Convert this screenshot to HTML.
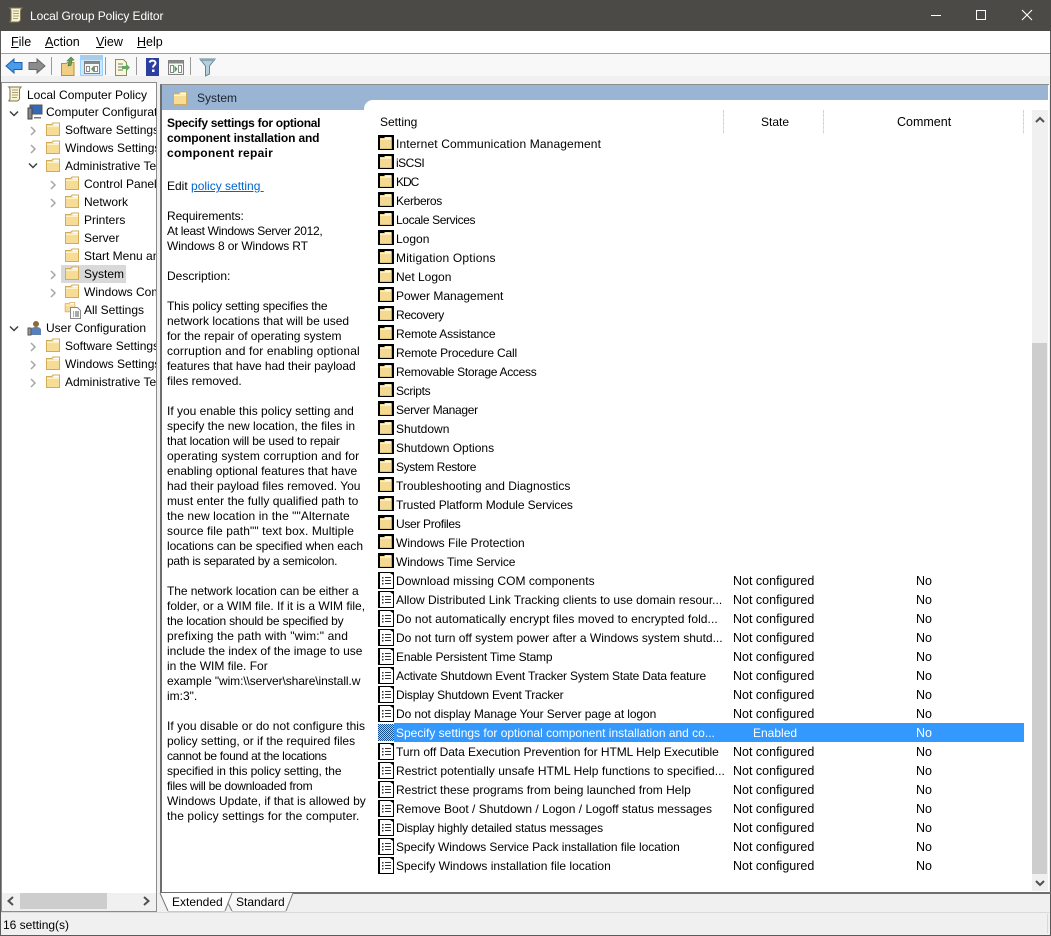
<!DOCTYPE html>
<html><head><meta charset="utf-8"><title>Local Group Policy Editor</title>
<style>
*{box-sizing:border-box}
html,body{margin:0;padding:0}
body{width:1051px;height:936px;position:relative;overflow:hidden;background:#f0f0f0;font:12px/15px "Liberation Sans",sans-serif;color:#000}
.a{position:absolute;white-space:nowrap}
svg{display:block;overflow:visible}
#tree .r{position:absolute;height:18px;line-height:18px;white-space:nowrap}
#tree svg{position:absolute}
.rw{height:19px;line-height:19px;position:relative;white-space:nowrap}
.rw svg{position:absolute;left:0;top:1px}
.rw b{font-weight:normal;position:absolute;left:18px;top:1px}
.rw i{font-style:normal;position:absolute;left:355px;top:1px;font-size:12.5px}
.rw u{text-decoration:none;position:absolute;left:538px;top:1px;font-size:12.5px}
.sel{background:linear-gradient(90deg,transparent 16px,#3399ff 16px);color:#fff}
.sep{position:absolute;top:110px;width:1px;height:24px;background:repeating-linear-gradient(180deg,#d4d4d4 0 3px,#ededed 3px 4px)}
</style></head><body>
<svg width="0" height="0" style="position:absolute"><defs>
<pattern id="dt" width="2" height="2" patternUnits="userSpaceOnUse"><rect width="2" height="2" fill="#a8d0f5"/><rect width="1" height="1" fill="#14508f"/><rect x="1" y="1" width="1" height="1" fill="#14508f"/></pattern>
<g id="fd"><path d="M1.500 3.500h5l1.500-1.500h6.500v12.500h-13z" fill="#f7dc95" stroke="#d2ab58"/><path d="M2 5h12v1H2z" fill="#fff3c8"/><path d="M8.500 2.500h5.500v2h-5.500z" fill="#fff"/></g>
<g id="fb"><path d="M0 0h16v15H0z" fill="#000"/><path d="M2 3h4l1-1h6.500v11.500H2z" fill="#f3d992"/><path d="M7 2.500h6v1.500H7z" fill="#fff8dc"/><path d="M2 4h11v1H2z" fill="#fdeebc"/><path d="M13 2.500h1V14H2v-.5h11z" fill="#c9a85c"/></g>
<g id="pl"><path d="M0 0h16v17H0z" fill="#000"/><path d="M2 1h10l3 2v13H2z" fill="#fff"/><path d="M4 5h1.500v1.500H4zM7 5h6v1H7zM4 8h1.500v1.500H4zM7 8h6v1H7zM4 11h1.500v1.500H4zM7 11h6v1H7z" fill="#333"/></g>
<g id="ch"><path d="M1 1l4 4-4 4" fill="none" stroke="#a6a6a6" stroke-width="1.500"/></g>
<g id="cd"><path d="M1 1.500l4 4 4-4" fill="none" stroke="#404040" stroke-width="1.500"/></g>
<g id="sc"><path d="M3.500 1h10.500c-1 1-1.500 2-1.500 3v8.500c0 1.500-1.500 2.500-3 2.500H1.500c1.200-.6 1.500-1.300 1.500-2.500V4C3 2.500 2.500 1.500 1.800 1z" fill="#faf3cf" stroke="#7f7658"/><path d="M5 4h6M5 6.500h6M5 9h6M5 11.500h5" stroke="#a89f78"/></g>
</defs></svg>

<!-- title bar -->
<div class="a" style="left:0;top:0;width:1051px;height:31px;background:#4b4a47"></div>
<svg class="a" style="left:8px;top:7px" width="16" height="17"><use href="#sc"/></svg>
<div class="a" style="left:30px;top:9px;color:#fff;letter-spacing:-.08px">Local Group Policy Editor</div>
<div class="a" style="left:931px;top:15px;width:10px;height:1px;background:#fff"></div>
<div class="a" style="left:976px;top:10px;width:10px;height:10px;border:1px solid #fff"></div>
<svg class="a" style="left:1022px;top:10px" width="10" height="10"><path d="M0 0l10 10M10 0L0 10" stroke="#fff" stroke-width="1.100"/></svg>
<!-- window borders -->
<div class="a" style="left:0;top:31px;width:1px;height:905px;background:#5a5a5a"></div>
<div class="a" style="left:1050px;top:31px;width:1px;height:905px;background:#5a5a5a"></div>
<div class="a" style="left:0;top:935px;width:1051px;height:1px;background:#5a5a5a"></div>

<!-- menu -->
<div class="a" style="left:1px;top:31px;width:1049px;height:22px;background:#fff"></div>
<div class="a" style="left:1px;top:53px;width:1049px;height:1px;background:#a0a0a0"></div>
<div class="a" style="left:11px;top:35px;font-size:12.5px"><span style="text-decoration:underline">F</span>ile</div>
<div class="a" style="left:45px;top:35px;font-size:12.5px"><span style="text-decoration:underline">A</span>ction</div>
<div class="a" style="left:96px;top:35px;font-size:12.5px"><span style="text-decoration:underline">V</span>iew</div>
<div class="a" style="left:137px;top:35px;font-size:12.5px"><span style="text-decoration:underline">H</span>elp</div>

<!-- toolbar -->
<div class="a" style="left:1px;top:54px;width:1049px;height:22px;background:#f8f8f8"></div>
<svg class="a" style="left:0;top:53px" width="225" height="24">
<path d="M6 13l8-7v3.500h8v7h-8V20z" fill="#4a9bea" stroke="#1d5fb0"/>
<path d="M45 13l-8-7v3.500h-8v7h8V20z" fill="#8c8c8c" stroke="#666"/>
<path d="M51.500 4v18M105.500 4v18M136.500 4v18M190.500 4v18" stroke="#9a9a9a"/>
<path d="M61.500 10.500h5l1-1h6.500v13h-12.500z" fill="#f0cf85" stroke="#b48f45"/>
<path d="M68 13l1-5-2 0 4-4 3 3-2 .5-1 5z" fill="#5ea05a" stroke="#3c7a3e" stroke-width=".6"/>
<rect x="80.500" y="2.500" width="22" height="20" fill="#cce8ff" stroke="#99d1ff"/>
<path d="M81 3h21v4H81z" fill="#a9cde6"/>
<rect x="84.500" y="8.500" width="15" height="12" fill="#f6f6f6" stroke="#808080"/><path d="M85 9h14v2H85z" fill="#888"/>
<path d="M86.500 13.500h3v5h-3zM94.500 13.500h3v5h-3z" fill="#fff" stroke="#8a8a8a"/><path d="M94 12.500l-3 3.500 3 3.500z" fill="#5ea05a"/>
<path d="M115.500 6.500h8l3 3v13h-11z" fill="#faf6d8" stroke="#8c8c70"/><path d="M118 11h5M118 14h5M118 17h5" stroke="#777"/><path d="M122 13h4v-2.500l4 4-4 4V16h-4z" fill="#62a95e"/>
<rect x="146" y="5" width="13" height="18" fill="#2b3f9e"/><path d="M149.500 9.500c1-2.500 6-2.500 6 .5 0 2-2.500 2-2.500 4.500" fill="none" stroke="#fff" stroke-width="2"/><rect x="152" y="16.500" width="2.500" height="2.500" fill="#fff"/>
<rect x="168.500" y="7.500" width="15" height="14" fill="#f6f6f6" stroke="#808080"/><path d="M169 8h14v2.500h-14z" fill="#888"/>
<path d="M170.500 12.500h3v7h-3zM178.500 12.500h3v7h-3z" fill="#fff" stroke="#8a8a8a"/><path d="M174.500 12.500l3 3.500-3 3.500z" fill="#4ea04e"/>
<path d="M200 6h15l-5.500 7v8l-4 2V13z" fill="#b7cfdc" stroke="#6b8494"/><path d="M200 6h15v2h-15z" fill="#8aa6b5"/>
</svg>

<!-- tree pane -->
<div id="tree" class="a" style="left:1px;top:82px;width:156px;height:830px;background:#fff;border:1px solid #8c8c8c;overflow:hidden">
<div class="r" style="left:25px;top:3px">Local Computer Policy</div>
<svg style="left:5px;top:3px" width="16" height="17"><use href="#sc"/></svg>
<div class="r" style="left:44px;top:20px">Computer Configuration</div>
<svg style="left:7px;top:27px" width="10" height="8"><use href="#cd"/></svg>
<svg style="left:25px;top:21px" width="16" height="16"><rect x="3" y="1" width="12" height="9" fill="#3569b5" stroke="#555"/><rect x="1" y="4" width="4" height="11" fill="#888" stroke="#444"/><path d="M7 13h7v1.500H7z" fill="#777"/></svg>
<div class="r" style="left:63px;top:38px">Software Settings</div>
<svg style="left:28px;top:43px" width="7" height="10"><use href="#ch"/></svg>
<svg style="left:43px;top:38px" width="16" height="16"><use href="#fd"/></svg>
<div class="r" style="left:63px;top:56px">Windows Settings</div>
<svg style="left:28px;top:61px" width="7" height="10"><use href="#ch"/></svg>
<svg style="left:43px;top:56px" width="16" height="16"><use href="#fd"/></svg>
<div class="r" style="left:63px;top:74px">Administrative Templates</div>
<svg style="left:26px;top:79px" width="10" height="8"><use href="#cd"/></svg>
<svg style="left:43px;top:74px" width="16" height="16"><use href="#fd"/></svg>
<div class="r" style="left:82px;top:92px">Control Panel</div>
<svg style="left:48px;top:97px" width="7" height="10"><use href="#ch"/></svg>
<svg style="left:62px;top:92px" width="16" height="16"><use href="#fd"/></svg>
<div class="r" style="left:82px;top:110px">Network</div>
<svg style="left:48px;top:115px" width="7" height="10"><use href="#ch"/></svg>
<svg style="left:62px;top:110px" width="16" height="16"><use href="#fd"/></svg>
<div class="r" style="left:82px;top:128px">Printers</div>
<svg style="left:62px;top:128px" width="16" height="16"><use href="#fd"/></svg>
<div class="r" style="left:82px;top:146px">Server</div>
<svg style="left:62px;top:146px" width="16" height="16"><use href="#fd"/></svg>
<div class="r" style="left:82px;top:164px">Start Menu and Taskbar</div>
<svg style="left:62px;top:164px" width="16" height="16"><use href="#fd"/></svg>
<div style="position:absolute;left:59px;top:182px;width:65px;height:18px;background:#d9d9d9"></div>
<div class="r" style="left:82px;top:182px">System</div>
<svg style="left:48px;top:187px" width="7" height="10"><use href="#ch"/></svg>
<svg style="left:62px;top:182px" width="16" height="16"><use href="#fd"/></svg>
<div class="r" style="left:82px;top:200px">Windows Components</div>
<svg style="left:48px;top:205px" width="7" height="10"><use href="#ch"/></svg>
<svg style="left:62px;top:200px" width="16" height="16"><use href="#fd"/></svg>
<div class="r" style="left:82px;top:218px">All Settings</div>
<svg style="left:62px;top:218px" width="18" height="18"><use href="#fd" transform="scale(.75)"/><path d="M6.500 6.500h7l3 3v8h-10z" fill="#fff" stroke="#888"/><path d="M9 11h1M11 11h4M9 13h1M11 13h4M9 15h1M11 15h4" stroke="#555"/></svg>
<div class="r" style="left:44px;top:236px">User Configuration</div>
<svg style="left:7px;top:242px" width="10" height="8"><use href="#cd"/></svg>
<svg style="left:25px;top:237px" width="16" height="16"><circle cx="9" cy="4" r="3" fill="#8a6a3a"/><path d="M4 15V10c0-2 2-3 5-3s5 1 5 3v5z" fill="#5a7fb5"/><rect x="1" y="8" width="3" height="7" fill="#999" stroke="#555"/></svg>
<div class="r" style="left:63px;top:254px">Software Settings</div>
<svg style="left:28px;top:259px" width="7" height="10"><use href="#ch"/></svg>
<svg style="left:43px;top:254px" width="16" height="16"><use href="#fd"/></svg>
<div class="r" style="left:63px;top:272px">Windows Settings</div>
<svg style="left:28px;top:277px" width="7" height="10"><use href="#ch"/></svg>
<svg style="left:43px;top:272px" width="16" height="16"><use href="#fd"/></svg>
<div class="r" style="left:63px;top:290px">Administrative Templates</div>
<svg style="left:28px;top:295px" width="7" height="10"><use href="#ch"/></svg>
<svg style="left:43px;top:290px" width="16" height="16"><use href="#fd"/></svg>
<!-- horizontal scrollbar -->
<div style="position:absolute;left:0;top:810px;width:155px;height:18px;background:#f0f0f0"></div>
<div style="position:absolute;left:18px;top:810px;width:87px;height:16px;background:#cdcdcd"></div>
<svg style="left:5px;top:813px" width="8" height="10"><path d="M6 1L1.500 5 6 9" fill="none" stroke="#505050" stroke-width="2"/></svg>
<svg style="left:140px;top:813px" width="8" height="10"><path d="M2 1l4.500 4L2 9" fill="none" stroke="#505050" stroke-width="2"/></svg>
</div>

<!-- right pane -->
<div class="a" style="left:160px;top:84px;width:889px;height:809px;background:#fff;border-left:2px solid #6e6e6e;border-top:1px solid #8c8c8c"></div>
<div class="a" style="left:162px;top:85px;width:886px;height:15px;background:#9ab5d3"></div>
<div class="a" style="left:162px;top:100px;width:210px;height:10px;background:#9ab5d3"></div>
<div class="a" style="left:364px;top:100px;width:10px;height:10px;background:#fff;border-top-left-radius:9px"></div>
<svg class="a" style="left:172px;top:90px" width="16" height="16"><use href="#fd"/></svg>
<div class="a" style="left:197px;top:91px;color:#1a2330">System</div>

<!-- description -->
<div class="a" style="left:167px;top:116px;font-weight:bold"><span style="letter-spacing:-.28px">Specify settings for optional</span><br><span style="letter-spacing:-.14px">component installation and</span><br><span style="letter-spacing:.3px">component repair</span></div>
<div class="a" style="left:167px;top:179px">Edit <span style="color:#0066cc;text-decoration:underline">policy setting&nbsp;</span></div>
<div class="a" style="left:167px;top:209px"><span style="letter-spacing:-.1px">Requirements:</span><br><span style="letter-spacing:-.3px">At least Windows Server 2012,</span><br><span style="letter-spacing:-.13px">Windows 8 or Windows RT</span><br><br>Description:<br><br><span style="letter-spacing:-.15px">This policy setting specifies the</span><br>network locations that will be used<br><span style="letter-spacing:-.05px">for the repair of operating system</span><br><span style="letter-spacing:.13px">corruption and for enabling optional</span><br><span style="letter-spacing:-.08px">features that have had their payload</span><br>files removed.<br><br>If you enable this policy setting and<br>specify the new location, the files in<br><span style="letter-spacing:-.15px">that location will be used to repair</span><br><span style="letter-spacing:.1px">operating system corruption and for</span><br>enabling optional features that have<br>had their payload files removed. You<br><span style="letter-spacing:.05px">must enter the fully qualified path to</span><br><span style="letter-spacing:.1px">the new location in the ""Alternate</span><br><span style="letter-spacing:.1px">source file path"" text box. Multiple</span><br><span style="letter-spacing:-.08px">locations can be specified when each</span><br><span style="letter-spacing:-.26px">path is separated by a semicolon.</span><br><br><span style="letter-spacing:-.05px">The network location can be either a</span><br>folder, or a WIM file. If it is a WIM file,<br><span style="letter-spacing:-.2px">the location should be specified by</span><br><span style="letter-spacing:.13px">prefixing the path with "wim:" and</span><br>include the index of the image to use<br>in the WIM file. For<br><span style="letter-spacing:-.1px">example "wim:\\server\share\install.w</span><br>im:3".<br><br><span style="letter-spacing:.05px">If you disable or do not configure this</span><br>policy setting, or if the required files<br><span style="letter-spacing:-.33px">cannot be found at the locations</span><br><span style="letter-spacing:-.1px">specified in this policy setting, the</span><br><span style="letter-spacing:-.28px">files will be downloaded from</span><br>Windows Update, if that is allowed by<br><span style="letter-spacing:.1px">the policy settings for the computer.</span></div>

<!-- list header -->
<div class="a" style="left:380px;top:115px">Setting</div>
<div class="a" style="left:761px;top:115px">State</div>
<div class="a" style="left:897px;top:115px;font-size:12.5px">Comment</div>
<div class="sep" style="left:723px"></div><div class="sep" style="left:823px"></div><div class="sep" style="left:1023px"></div>

<!-- list -->
<div class="a" style="left:378px;top:134px;width:646px">
<div class="rw"><svg width="16" height="17"><use href="#fb"/></svg><b style="letter-spacing:.13px">Internet Communication Management</b></div>
<div class="rw"><svg width="16" height="17"><use href="#fb"/></svg><b style="letter-spacing:-.5px">iSCSI</b></div>
<div class="rw"><svg width="16" height="17"><use href="#fb"/></svg><b style="letter-spacing:-1px">KDC</b></div>
<div class="rw"><svg width="16" height="17"><use href="#fb"/></svg><b style="letter-spacing:-.35px">Kerberos</b></div>
<div class="rw"><svg width="16" height="17"><use href="#fb"/></svg><b style="letter-spacing:-.37px">Locale Services</b></div>
<div class="rw"><svg width="16" height="17"><use href="#fb"/></svg><b>Logon</b></div>
<div class="rw"><svg width="16" height="17"><use href="#fb"/></svg><b style="letter-spacing:.2px">Mitigation Options</b></div>
<div class="rw"><svg width="16" height="17"><use href="#fb"/></svg><b>Net Logon</b></div>
<div class="rw"><svg width="16" height="17"><use href="#fb"/></svg><b>Power Management</b></div>
<div class="rw"><svg width="16" height="17"><use href="#fb"/></svg><b style="letter-spacing:-.35px">Recovery</b></div>
<div class="rw"><svg width="16" height="17"><use href="#fb"/></svg><b style="letter-spacing:-.2px">Remote Assistance</b></div>
<div class="rw"><svg width="16" height="17"><use href="#fb"/></svg><b style="letter-spacing:-.18px">Remote Procedure Call</b></div>
<div class="rw"><svg width="16" height="17"><use href="#fb"/></svg><b style="letter-spacing:-.29px">Removable Storage Access</b></div>
<div class="rw"><svg width="16" height="17"><use href="#fb"/></svg><b style="letter-spacing:-.34px">Scripts</b></div>
<div class="rw"><svg width="16" height="17"><use href="#fb"/></svg><b style="letter-spacing:-.3px">Server Manager</b></div>
<div class="rw"><svg width="16" height="17"><use href="#fb"/></svg><b>Shutdown</b></div>
<div class="rw"><svg width="16" height="17"><use href="#fb"/></svg><b>Shutdown Options</b></div>
<div class="rw"><svg width="16" height="17"><use href="#fb"/></svg><b style="letter-spacing:-.38px">System Restore</b></div>
<div class="rw"><svg width="16" height="17"><use href="#fb"/></svg><b>Troubleshooting and Diagnostics</b></div>
<div class="rw"><svg width="16" height="17"><use href="#fb"/></svg><b style="letter-spacing:-.11px">Trusted Platform Module Services</b></div>
<div class="rw"><svg width="16" height="17"><use href="#fb"/></svg><b style="letter-spacing:-.33px">User Profiles</b></div>
<div class="rw"><svg width="16" height="17"><use href="#fb"/></svg><b>Windows File Protection</b></div>
<div class="rw"><svg width="16" height="17"><use href="#fb"/></svg><b style="letter-spacing:-.1px">Windows Time Service</b></div>
<div class="rw"><svg width="16" height="17"><use href="#pl"/></svg><b style="letter-spacing:.04px">Download missing COM components</b><i>Not configured</i><u>No</u></div>
<div class="rw"><svg width="16" height="17"><use href="#pl"/></svg><b>Allow Distributed Link Tracking clients to use domain resour...</b><i>Not configured</i><u>No</u></div>
<div class="rw"><svg width="16" height="17"><use href="#pl"/></svg><b style="letter-spacing:.07px">Do not automatically encrypt files moved to encrypted fold...</b><i>Not configured</i><u>No</u></div>
<div class="rw"><svg width="16" height="17"><use href="#pl"/></svg><b>Do not turn off system power after a Windows system shutd...</b><i>Not configured</i><u>No</u></div>
<div class="rw"><svg width="16" height="17"><use href="#pl"/></svg><b style="letter-spacing:-.18px">Enable Persistent Time Stamp</b><i>Not configured</i><u>No</u></div>
<div class="rw"><svg width="16" height="17"><use href="#pl"/></svg><b style="letter-spacing:-.19px">Activate Shutdown Event Tracker System State Data feature</b><i>Not configured</i><u>No</u></div>
<div class="rw"><svg width="16" height="17"><use href="#pl"/></svg><b style="letter-spacing:-.2px">Display Shutdown Event Tracker</b><i>Not configured</i><u>No</u></div>
<div class="rw"><svg width="16" height="17"><use href="#pl"/></svg><b style="letter-spacing:-.1px">Do not display Manage Your Server page at logon</b><i>Not configured</i><u>No</u></div>
<div class="rw sel"><svg width="16" height="17"><rect width="16" height="17" fill="url(#dt)"/></svg><b>Specify settings for optional component installation and co...</b><i style="left:375px;font-size:12px">Enabled</i><u>No</u></div>
<div class="rw"><svg width="16" height="17"><use href="#pl"/></svg><b style="letter-spacing:-.05px">Turn off Data Execution Prevention for HTML Help Executible</b><i>Not configured</i><u>No</u></div>
<div class="rw"><svg width="16" height="17"><use href="#pl"/></svg><b style="letter-spacing:.04px">Restrict potentially unsafe HTML Help functions to specified...</b><i>Not configured</i><u>No</u></div>
<div class="rw"><svg width="16" height="17"><use href="#pl"/></svg><b>Restrict these programs from being launched from Help</b><i>Not configured</i><u>No</u></div>
<div class="rw"><svg width="16" height="17"><use href="#pl"/></svg><b>Remove Boot / Shutdown / Logon / Logoff status messages</b><i>Not configured</i><u>No</u></div>
<div class="rw"><svg width="16" height="17"><use href="#pl"/></svg><b style="letter-spacing:-.15px">Display highly detailed status messages</b><i>Not configured</i><u>No</u></div>
<div class="rw"><svg width="16" height="17"><use href="#pl"/></svg><b style="letter-spacing:-.08px">Specify Windows Service Pack installation file location</b><i>Not configured</i><u>No</u></div>
<div class="rw"><svg width="16" height="17"><use href="#pl"/></svg><b>Specify Windows installation file location</b><i>Not configured</i><u>No</u></div>
</div>

<!-- vertical scrollbar -->
<div class="a" style="left:1032px;top:110px;width:16px;height:781px;background:#f0f0f0"></div>
<div class="a" style="left:1032px;top:343px;width:15px;height:531px;background:#cdcdcd"></div>
<svg class="a" style="left:1035px;top:116px" width="10" height="8"><path d="M1 6l4-4 4 4" fill="none" stroke="#505050" stroke-width="2"/></svg>
<svg class="a" style="left:1035px;top:879px" width="10" height="8"><path d="M1 2l4 4 4-4" fill="none" stroke="#505050" stroke-width="2"/></svg>

<!-- tab strip -->
<div class="a" style="left:160px;top:892px;width:891px;height:2px;background:#6e6e6e"></div>
<div class="a" style="left:158px;top:894px;width:892px;height:18px;background:#f0f0f0"></div>
<svg class="a" style="left:158px;top:892px" width="140" height="21">
<path d="M2 1l8 18h57l7-18z" fill="#fff"/>
<path d="M74 1l-4 10 4 8h54l7-18z" fill="#f8f8f8"/>
<path d="M2 1l8 18" fill="none" stroke="#777"/>
<path d="M10 19.500h57M74 19.500h54" fill="none" stroke="#c8c8c8"/>
<path d="M67 19l7-18M74 1l-4 10 4 8M128 19l7-18" fill="none" stroke="#777"/>
</svg>
<div class="a" style="left:172px;top:895px">Extended</div>
<div class="a" style="left:236px;top:895px">Standard</div>

<!-- status bar -->
<div class="a" style="left:1px;top:912px;width:1049px;height:1px;background:#dadada"></div>
<div class="a" style="left:3px;top:918px;color:#000">16 setting(s)</div>
<div class="a" style="left:1047px;top:914px;width:1px;height:19px;background:#d8d8d8"></div>
</body></html>
